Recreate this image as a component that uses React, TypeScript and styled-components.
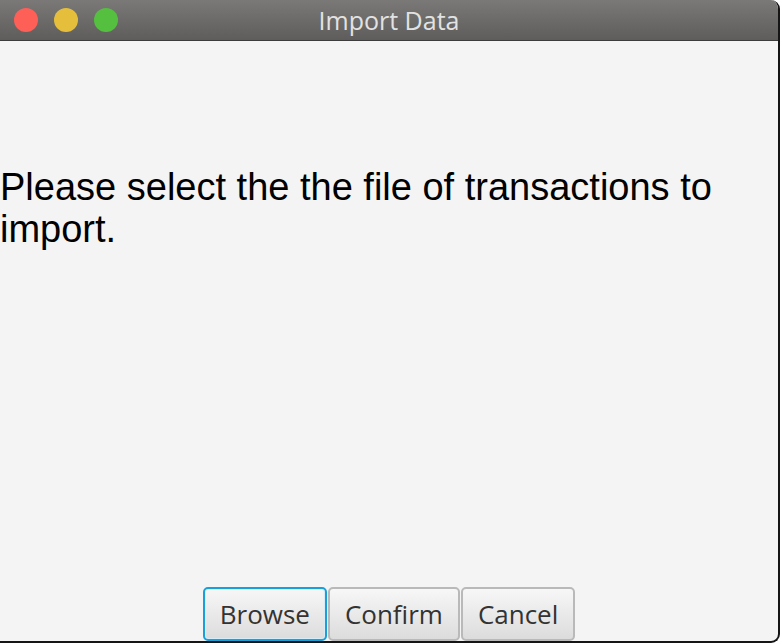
import styled, { createGlobalStyle } from 'styled-components';

const GlobalStyle = createGlobalStyle`
    html, body {
        margin: 0;
        padding: 0;
        background: #ffffff;
        overflow: hidden;
    }
`;

const TRAFFIC = ['#fe5f57', '#e5bf3b', '#55bf40'];

export default function App() {
    return (
        <>
            <GlobalStyle />
            <Window>
                <TitleBar>
                    <Lights>
                        {TRAFFIC.map((c) => (
                            <Light key={c} color={c} />
                        ))}
                    </Lights>
                    <Title>Import Data</Title>
                </TitleBar>
                <Content>
                    <Message>
                        Please select the the file of transactions to import.
                    </Message>
                    <ButtonRow>
                        <Button $focused>Browse</Button>
                        <Button>Confirm</Button>
                        <Button>Cancel</Button>
                    </ButtonRow>
                </Content>
            </Window>
        </>
    );
}

const Window = styled.div`
    width: 778px;
    height: 641px;
    display: flex;
    flex-direction: column;
    background: #f4f4f4;
    border-right: 2px solid #151515;
    border-bottom: 2px solid #151515;
    border-radius: 0 9px 9px 0;
    overflow: hidden;
`;

const TitleBar = styled.div`
    position: relative;
    height: 40px;
    flex: none;
    display: flex;
    align-items: center;
    justify-content: center;
    background: linear-gradient(180deg, #7a7977 0%, #5e5d5b 100%);
    border-bottom: 1px solid #3c3c3c;
`;

const Lights = styled.div`
    position: absolute;
    left: 14px;
    top: 8px;
    display: flex;
    gap: 16px;
`;

const Light = styled.span<{ color: string }>`
    width: 24px;
    height: 24px;
    border-radius: 50%;
    background: ${(p) => p.color};
`;

const Title = styled.div`
    font-family: 'Open Sans', 'Noto Sans', sans-serif;
    font-size: 25px;
    color: #e2e2e2;
`;

const Content = styled.div`
    flex: 1;
    display: flex;
    flex-direction: column;
    justify-content: space-between;
`;

const Message = styled.p`
    margin: 125px 0 0 0;
    width: 760px;
    font-family: 'Liberation Sans', Arial, sans-serif;
    font-size: 38px;
    line-height: 42px;
    color: #000;
`;

const ButtonRow = styled.div`
    display: flex;
    justify-content: center;
    gap: 1px;
`;

const Button = styled.button<{ $focused?: boolean }>`
    height: 54px;
    padding: 0 15px;
    font-family: 'Open Sans', 'Noto Sans', sans-serif;
    font-size: 26px;
    color: #333;
    background: linear-gradient(180deg, #f7f7f7 0%, #dcdcdc 100%);
    border: 2px solid ${(p) => (p.$focused ? '#1aa0d8' : '#b9b9b9')};
    border-radius: 5px;
    box-shadow: ${(p) => (p.$focused ? 'inset 0 0 0 1px #d7ecf7' : 'none')};
`;
